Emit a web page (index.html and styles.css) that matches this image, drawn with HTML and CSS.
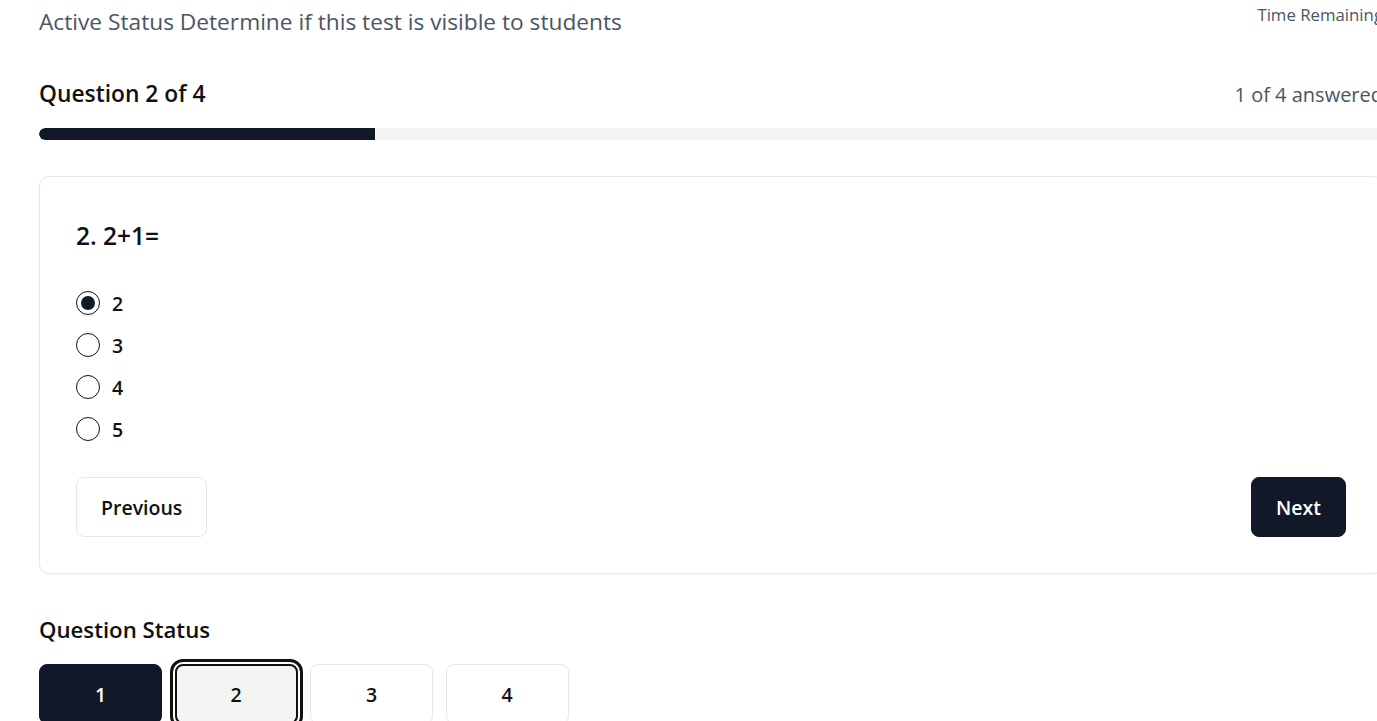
FILE: index.html
```html
<!DOCTYPE html>
<html lang="en">
<head>
<meta charset="utf-8">
<title>Test</title>
<link rel="stylesheet" href="styles.css">
</head>
<body>
<div class="page">
  <div class="top-row">
    <p class="status-text">Active Status Determine if this test is visible to students</p>
    <p class="time-label">Time Remaining</p>
  </div>

  <div class="progress-head">
    <h2 class="q-count">Question 2 of 4</h2>
    <span class="answered">1 of 4 answered</span>
  </div>
  <div class="track"><div class="fill" style="width:25%"></div></div>

  <section class="card">
    <h3 class="q-title">2. 2+1=</h3>
    <ul class="options">
      <li><label class="opt"><input type="radio" name="q2" checked><span>2</span></label></li>
      <li><label class="opt"><input type="radio" name="q2"><span>3</span></label></li>
      <li><label class="opt"><input type="radio" name="q2"><span>4</span></label></li>
      <li><label class="opt"><input type="radio" name="q2"><span>5</span></label></li>
    </ul>
    <div class="nav">
      <button class="btn btn-outline">Previous</button>
      <button class="btn btn-dark">Next</button>
    </div>
  </section>

  <h2 class="status-title">Question Status</h2>
  <div class="status-grid">
    <button class="qbtn qbtn-answered">1</button>
    <button class="qbtn qbtn-current">2</button>
    <button class="qbtn">3</button>
    <button class="qbtn">4</button>
  </div>
</div>
</body>
</html>
```
FILE: styles.css
```css
* { box-sizing: border-box; }
html, body { margin: 0; padding: 0; background: #fff; overflow: hidden; }
body {
  font-family: "Open Sans", "Noto Sans", sans-serif;
  color: #111;
  width: 1377px;
  height: 721px;
}
.page {
  width: 1344px;
  margin-left: 39px;
}
.top-row {
  display: flex;
  justify-content: space-between;
  align-items: flex-start;
  height: 56px;
}
.status-text {
  margin: 8px 0 0;
  font-size: 22.7px;
  line-height: 28px;
  color: #4b5563;
}
.time-label {
  margin: 4px 0 0;
  font-size: 16.8px;
  line-height: 22px;
  color: #4b5563;
}
.progress-head {
  display: flex;
  justify-content: space-between;
  align-items: center;
  margin-top: 24px;
  height: 28px;
}
.q-count {
  margin: 0;
  font-size: 22.8px;
  font-weight: 600;
  line-height: 28px;
}
.answered {
  font-size: 20px;
  color: #4b5563;
}
.track {
  margin-top: 20px;
  height: 12px;
  background: #f4f4f2;
  border-radius: 6px 0 0 6px;
  overflow: hidden;
}
.fill {
  height: 100%;
  background: #111827;
  border-radius: 6px 0 0 6px;
}
.card {
  margin-top: 36px;
  border: 1px solid #e5e7eb;
  border-radius: 10px;
  padding: 45px 36px 36px;
  box-shadow: 0 1px 2px rgba(0,0,0,0.04);
}
.q-title {
  margin: 0;
  font-size: 24.5px;
  font-weight: 600;
  line-height: 28px;
}
.options {
  list-style: none;
  margin: 32px 0 0;
  padding: 0;
}
.opt {
  display: flex;
  align-items: center;
  gap: 12px;
  height: 42px;
  font-size: 19.5px;
  font-weight: 600;
}
.opt input {
  appearance: none;
  -webkit-appearance: none;
  margin: 0;
  width: 24px;
  height: 24px;
  border: 1.5px solid #111;
  border-radius: 50%;
  display: grid;
  place-items: center;
}
.opt input:checked::before {
  content: "";
  width: 14px;
  height: 14px;
  border-radius: 50%;
  background: #111827;
}
.nav {
  display: flex;
  justify-content: space-between;
  margin-top: 27px;
}
.btn {
  height: 60px;
  border-radius: 8px;
  font-family: inherit;
  font-size: 19.5px;
  font-weight: 600;
  padding: 0 24px;
  cursor: pointer;
}
.btn-outline {
  background: #fff;
  border: 1px solid #e5e7eb;
  color: #111;
}
.btn-dark {
  background: #111827;
  border: 1px solid #111827;
  color: #fff;
}
.status-title {
  margin: 42px 0 0;
  font-size: 22.2px;
  font-weight: 600;
  line-height: 28px;
}
.status-grid {
  display: flex;
  gap: 12.5px;
  margin-top: 20px;
}
.qbtn {
  width: 123px;
  height: 60px;
  border: 1px solid #e5e7eb;
  border-radius: 8px;
  background: #fff;
  font-family: inherit;
  font-size: 19.5px;
  font-weight: 600;
  color: #111;
}
.qbtn-answered {
  background: #111827;
  border-color: #111827;
  color: #fff;
}
.qbtn-current {
  background: #f4f4f2;
  border: 2px solid #111;
  box-shadow: 0 0 0 2px #fff, 0 0 0 5px #111;
}
```
